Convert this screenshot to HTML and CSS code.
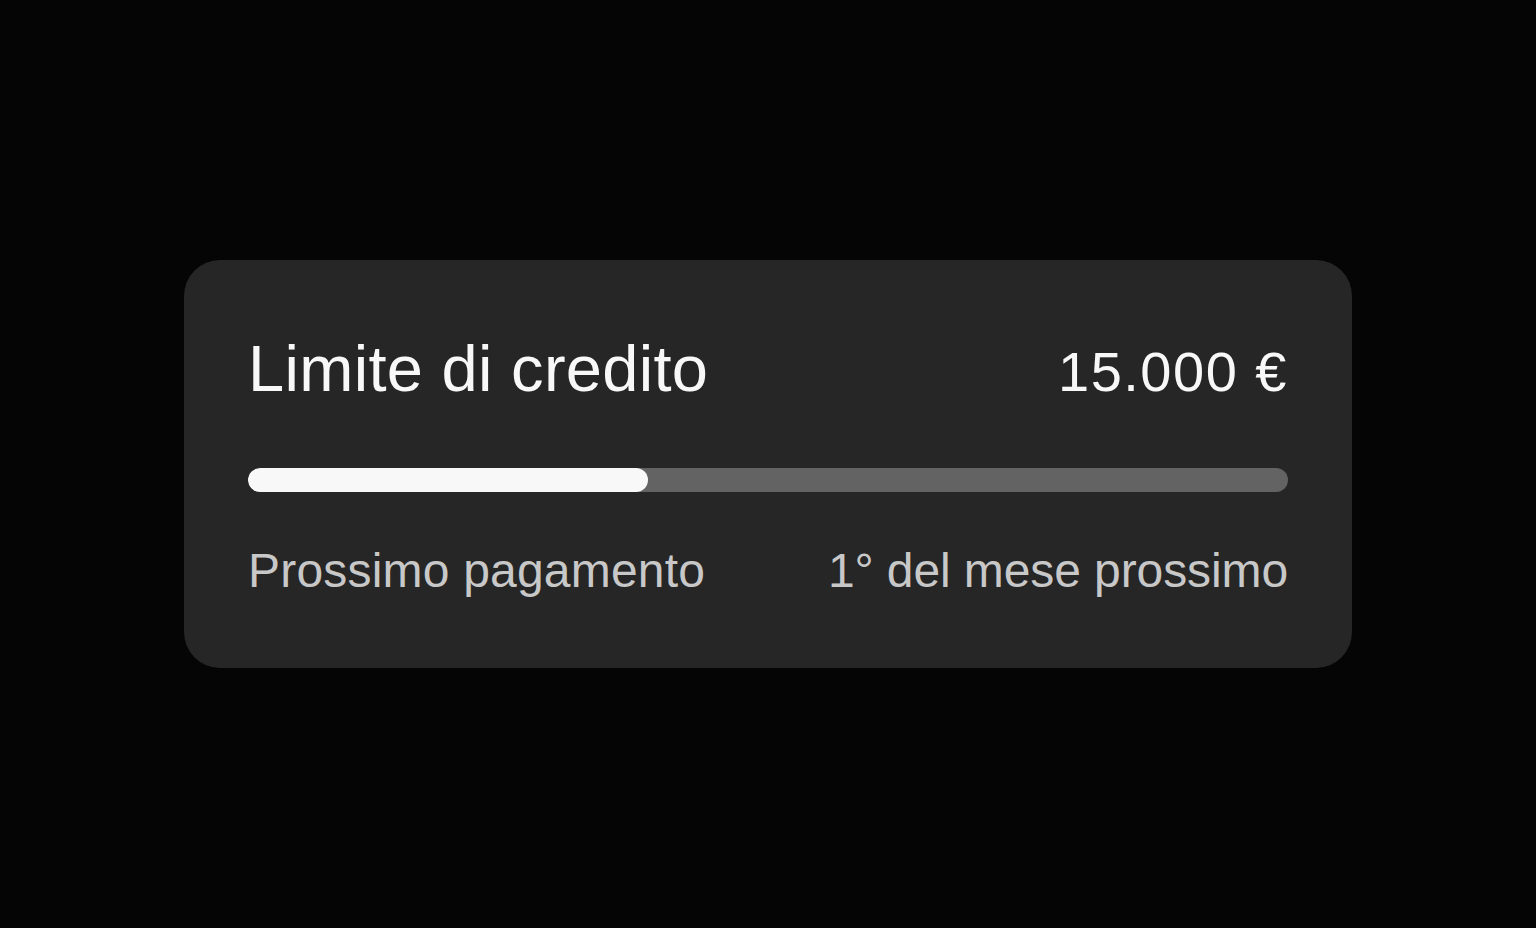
FILE: index.html
```
<!DOCTYPE html>
<html lang="it">
  <head>
    <meta charset="UTF-8" />
    <meta name="viewport" content="width=device-width, initial-scale=1.0" />
    <title>Limite di credito</title>
    <link rel="stylesheet" href="styles.css">
  </head>
  <body>
    <section class="kort">
      <div class="top">
        <h1>Limite di credito</h1>
        <span class="beloeb">15.000 €</span>
      </div>
      <div class="bar">
        <div class="fyld" style="width: 38.46%"></div>
      </div>
      <div class="bund">
        <span>Prossimo pagamento</span>
        <span class="dato">1° del mese prossimo</span>
      </div>
    </section>
  </body>
</html>
```

FILE: styles.css
```
body {
  margin: 0;
  min-height: 100vh;
  display: flex;
  align-items: center;
  justify-content: center;
  background-color: #050505;
  font-family: "Liberation Sans", Arial, sans-serif;
}

.kort {
  box-sizing: border-box;
  width: 1168px;
  padding: 77px 64px 73px 64px;
  border-radius: 36px;
  background-color: #262626;
}

.top {
  display: flex;
  justify-content: space-between;
  align-items: baseline;
  height: 64px;
  color: #f8f8f8;
}

.top h1 {
  margin: 0;
  font-size: 65px;
  font-weight: 400;
  line-height: 64px;
  letter-spacing: 0.3px;
}

.beloeb {
  font-size: 56px;
  line-height: 58px;
  letter-spacing: 1.5px;
}

.bar {
  height: 24px;
  margin-top: 67px;
  border-radius: 12px;
  background-color: #636363;
  overflow: hidden;
}

.fyld {
  height: 100%;
  border-radius: 12px;
  background-color: #f8f8f8;
}

.bund {
  display: flex;
  justify-content: space-between;
  margin-top: 55px;
  font-size: 48px;
  line-height: 48px;
  letter-spacing: 0.2px;
  color: #c8c8c8;
}

.dato {
  letter-spacing: -0.1px;
}
```
